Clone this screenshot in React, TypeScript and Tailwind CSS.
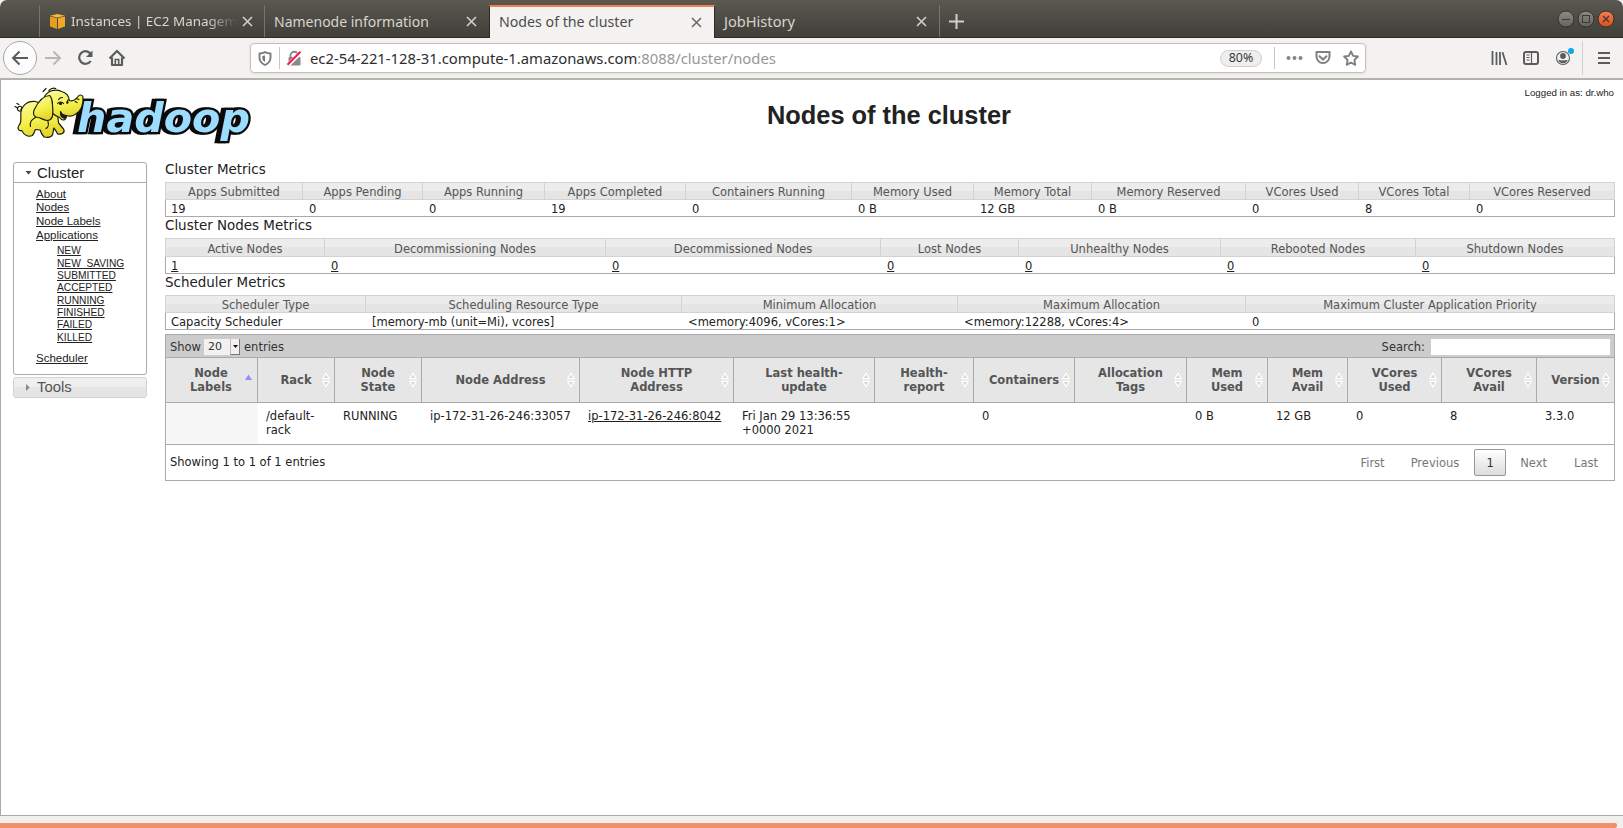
import type { ReactNode } from 'react';

type Col = { w: string; label: string; value: string; link?: boolean };

const clusterMetrics: Col[] = [
  { w: 'w-[137px]', label: 'Apps Submitted', value: '19' },
  { w: 'w-[120px]', label: 'Apps Pending', value: '0' },
  { w: 'w-[122px]', label: 'Apps Running', value: '0' },
  { w: 'w-[141px]', label: 'Apps Completed', value: '19' },
  { w: 'w-[166px]', label: 'Containers Running', value: '0' },
  { w: 'w-[122px]', label: 'Memory Used', value: '0 B' },
  { w: 'w-[118px]', label: 'Memory Total', value: '12 GB' },
  { w: 'w-[154px]', label: 'Memory Reserved', value: '0 B' },
  { w: 'w-[113px]', label: 'VCores Used', value: '0' },
  { w: 'w-[111px]', label: 'VCores Total', value: '8' },
  { w: 'flex-1', label: 'VCores Reserved', value: '0' },
];

const nodeMetrics: Col[] = [
  { w: 'w-[159px]', label: 'Active Nodes', value: '1', link: true },
  { w: 'w-[281px]', label: 'Decommissioning Nodes', value: '0', link: true },
  { w: 'w-[275px]', label: 'Decommissioned Nodes', value: '0', link: true },
  { w: 'w-[138px]', label: 'Lost Nodes', value: '0', link: true },
  { w: 'w-[202px]', label: 'Unhealthy Nodes', value: '0', link: true },
  { w: 'w-[195px]', label: 'Rebooted Nodes', value: '0', link: true },
  { w: 'flex-1', label: 'Shutdown Nodes', value: '0', link: true },
];

const schedulerMetrics: Col[] = [
  { w: 'w-[200px]', label: 'Scheduler Type', value: 'Capacity Scheduler' },
  { w: 'w-[316px]', label: 'Scheduling Resource Type', value: '[memory-mb (unit=Mi), vcores]' },
  { w: 'w-[276px]', label: 'Minimum Allocation', value: '<memory:4096, vCores:1>' },
  { w: 'w-[288px]', label: 'Maximum Allocation', value: '<memory:12288, vCores:4>' },
  { w: 'flex-1', label: 'Maximum Cluster Application Priority', value: '0' },
];

type NodeCol = { w: string; head: string[]; body: string[]; link?: boolean };

const nodeCols: NodeCol[] = [
  { w: 'w-[92px]', head: ['Node', 'Labels'], body: [] },
  { w: 'w-[77px]', head: ['Rack'], body: ['/default-', 'rack'] },
  { w: 'w-[87px]', head: ['Node', 'State'], body: ['RUNNING'] },
  { w: 'w-[158px]', head: ['Node Address'], body: ['ip-172-31-26-246:33057'] },
  { w: 'w-[154px]', head: ['Node HTTP', 'Address'], body: ['ip-172-31-26-246:8042'], link: true },
  { w: 'w-[141px]', head: ['Last health-', 'update'], body: ['Fri Jan 29 13:36:55', '+0000 2021'] },
  { w: 'w-[99px]', head: ['Health-', 'report'], body: [] },
  { w: 'w-[101px]', head: ['Containers'], body: ['0'] },
  { w: 'w-[112px]', head: ['Allocation', 'Tags'], body: [] },
  { w: 'w-[81px]', head: ['Mem', 'Used'], body: ['0 B'] },
  { w: 'w-[80px]', head: ['Mem', 'Avail'], body: ['12 GB'] },
  { w: 'w-[94px]', head: ['VCores', 'Used'], body: ['0'] },
  { w: 'w-[95px]', head: ['VCores', 'Avail'], body: ['8'] },
  { w: 'flex-1', head: ['Version'], body: ['3.3.0'] },
];

function CloseX({ className }: { className: string }) {
  return (
    <svg width="11" height="11" viewBox="0 0 11 11" className={className}>
      <path d="M1 1 10 10M10 1 1 10" stroke="currentColor" strokeWidth="1.6" fill="none" />
    </svg>
  );
}

function TabBar() {
  return (
    <div className="flex h-[38px] items-stretch rounded-t-[7px] border-b border-[#2c2b28] bg-linear-to-b from-[#5b5850] to-[#403f3a] pt-[5px] font-['Noto_Sans',sans-serif] text-[14px] text-[#d9d5cb]">
      <div className="w-[39px]" />
      <div className="flex w-[225px] items-center border-l border-[#77746c] pt-[1px] pr-[12px] pl-[10px]">
        <svg width="15" height="15" viewBox="0 0 15 15" className="mr-[6px] shrink-0">
          <path d="M0 2.5 7 4v11L0 12.5z" fill="#e79e1c" />
          <path d="M15 2.5 8 4v11l7-2.500z" fill="#eda929" />
          <path d="M0 1.700 7.500 0 15 1.700 7.500 3.400z" fill="#f8b93c" />
        </svg>
        <div className="w-[166px] text-[13.45px] whitespace-nowrap [mask-image:linear-gradient(to_right,black_82%,transparent)]">
          Instances | EC2 Managem
        </div>
        <CloseX className="ml-[5px] shrink-0 text-[#d3d0c7]" />
      </div>
      <div className="flex w-[225px] items-center justify-between border-l border-[#77746c] pt-[1px] pr-[12px] pl-[9px]">
        <span>Namenode information</span>
        <CloseX className="text-[#d3d0c7]" />
      </div>
      <div className="mb-[-1px] flex w-[226px] items-center justify-between border-t-2 border-r border-l border-t-[#f0824f] border-r-[#2c2b28] border-l-[#2c2b28] bg-[#f4f2f1] pr-[12px] pb-[1px] pl-[9px] text-[#4c4c4c]">
        <span className="text-[14.2px]">Nodes of the cluster</span>
        <CloseX className="text-[#6a6a6a]" />
      </div>
      <div className="flex w-[225px] items-center justify-between border-r border-[#77746c] pt-[1px] pr-[12px] pl-[9px]">
        <span className="text-[14.6px]">JobHistory</span>
        <CloseX className="text-[#d3d0c7]" />
      </div>
      <div className="flex flex-1 items-center justify-between pr-[8px] pl-[9px]">
        <svg width="15" height="15" viewBox="0 0 15 15">
          <path d="M7.500 0v15M0 7.500h15" stroke="#d3d0c7" strokeWidth="2" />
        </svg>
        <svg width="58" height="20" viewBox="0 0 58 20" className="mb-[4px]">
          <defs>
            <linearGradient id="gray" x2="0" y2="1">
              <stop offset="0" stopColor="#8b8982" />
              <stop offset="1" stopColor="#65635d" />
            </linearGradient>
            <linearGradient id="orange" x2="0" y2="1">
              <stop offset="0" stopColor="#f37e50" />
              <stop offset="1" stopColor="#dc4f1d" />
            </linearGradient>
          </defs>
          <g stroke="#33322e">
            <circle cx="9" cy="10" r="8" fill="url(#gray)" />
            <circle cx="29" cy="10" r="8" fill="url(#gray)" />
            <circle cx="49" cy="10" r="8" fill="url(#orange)" />
          </g>
          <g stroke="#3c3b37" fill="none">
            <path d="M5 10.500h8" />
            <rect x="25.500" y="6.500" width="7" height="7" />
            <path d="m46 7 6 6m0-6-6 6" strokeWidth="1.300" />
          </g>
        </svg>
      </div>
    </div>
  );
}

function NavBar() {
  return (
    <div className="flex h-[42px] items-center border-b-2 border-[#b5b1ad] bg-[#f4f2f1] font-['Noto_Sans',sans-serif]">
      <svg width="250" height="40" viewBox="0 0 250 40" fill="none" stroke="#5c5c5c" strokeWidth="2" className="shrink-0">
        <circle cx="20" cy="20" r="16.500" fill="#fcfcfc" stroke="#a9a7a4" strokeWidth="1" />
        <path d="M28 20H13.500M19.500 13.500 13 20l6.500 6.500" />
        <path d="M45 20h14.500M53.500 13.500 60 20l-6.500 6.500" stroke="#b9b7b5" />
        <path d="M91 16.500a6.300 6.300 0 1 0-.3 6.500" strokeWidth="2.200" />
        <path d="M92.500 12.500v6.500H86z" fill="#5c5c5c" stroke="none" />
        <path d="M109.500 20.500 117 13l7.500 7.500M112 19.500v7.500h10v-7.500" strokeWidth="2.200" strokeLinejoin="round" />
        <path d="M115.300 26v-4.500h3.400V26" strokeWidth="1.600" />
      </svg>
      <div className="flex h-[30px] w-[1116px] items-center rounded-[4px] border border-[#c3c0bd] bg-white shadow-[0_1px_3px_rgba(0,0,0,0.08)]">
        <svg width="59" height="28" viewBox="0 0 59 28" className="shrink-0">
          <path d="M14 8.200c-2 1.100-3.500 1.300-5.500 1.300v4c0 3.600 1.600 5.800 5.500 7.500 3.900-1.700 5.500-3.900 5.500-7.500v-4c-2 0-3.500-.2-5.500-1.300z" fill="none" stroke="#7b7b7b" strokeWidth="1.900" strokeLinejoin="round" />
          <path d="M14 11.200c-1 .5-1.700.7-2.700.8v1.800c0 2 .8 3.200 2.700 4.300z" fill="#7b7b7b" />
          <path d="M28.500 3v22" stroke="#c9c7c4" />
          <path d="M39.500 14v-2.500a3.800 3.800 0 0 1 7.600 0V14" fill="none" stroke="#8a8a8a" strokeWidth="1.900" />
          <rect x="37.500" y="13" width="12" height="8.500" rx="1" fill="#8a8a8a" />
          <path d="M37.300 20.800 50 8.200" stroke="#fff" strokeWidth="4" />
          <path d="M36.500 20.800 49.500 7.800" stroke="#f5154b" strokeWidth="2" />
        </svg>
        <div className="flex-1 text-[14.82px] whitespace-nowrap text-[#2e2e2e]">
          ec2-54-221-128-31.compute-1.amazonaws.com<span className="text-[#979797]">:8088/cluster/nodes</span>
        </div>
        <div className="mr-[12px] flex h-[17px] w-[42px] items-center justify-center rounded-full border border-[#d0cecb] bg-[#efeeee] pt-[1px] text-[12.4px] text-[#3a3a3a]">
          80%
        </div>
        <svg width="91" height="28" viewBox="0 0 91 28" className="shrink-0" fill="none" stroke="#7f7f7f" strokeWidth="2">
          <path d="M.5 3v22" stroke="#c9c7c4" strokeWidth="1" />
          <g fill="#858585" stroke="none">
            <circle cx="14.500" cy="14" r="2" />
            <circle cx="20.500" cy="14" r="2" />
            <circle cx="26.500" cy="14" r="2" />
          </g>
          <path d="M42.500 8h13v4.500a6.500 6.500 0 0 1-13 0z" strokeLinejoin="round" />
          <path d="m45.500 12.300 3.500 3.300 3.500-3.300" strokeLinecap="round" />
          <path d="m77 7.400 2.100 4.500 4.800.6-3.500 3.400.8 4.900-4.200-2.300-4.200 2.300.8-4.900-3.500-3.400 4.800-.6z" strokeWidth="1.900" strokeLinejoin="round" />
        </svg>
      </div>
      <div className="flex-1" />
      <svg width="140" height="40" viewBox="0 0 140 40" className="shrink-0" fill="none" stroke="#5c5c5c" strokeWidth="2">
        <path d="M9.500 13v14M13.500 14v13M17 14v13M19.500 14.300l4 12.700" strokeWidth="1.800" />
        <rect x="41" y="14" width="14" height="12" rx="2" />
        <path d="M48.500 14v12M43.500 17h3M43.500 19.500h3M43.500 22h3" strokeWidth="1.200" />
        <circle cx="80" cy="20" r="6.500" strokeWidth="1.100" />
        <circle cx="80" cy="18" r="2.900" fill="#5c5c5c" stroke="none" />
        <path d="M75.500 21.500c1.500 1.200 7.500 1.200 9 0 0 5-9 5-9 0z" fill="#5c5c5c" stroke="none" />
        <circle cx="88" cy="13" r="3" fill="#0aa9ee" stroke="none" />
        <path d="M99.500 3v34" stroke="#d3d0ce" strokeWidth="1" />
        <path d="M115 15h12M115 20h12M115 25h12" />
      </svg>
    </div>
  );
}

function Logo() {
  return (
    <svg width="244" height="62" viewBox="0 0 244 62" className="shrink-0">
      <defs>
        <linearGradient id="skin" x2="0.300" y2="1">
          <stop offset="0" stopColor="#fbf9a0" />
          <stop offset="0.600" stopColor="#f5f04e" />
          <stop offset="1" stopColor="#e2d52c" />
        </linearGradient>
      </defs>
      <text
        x="63"
        y="46.500"
        textLength="173"
        lengthAdjust="spacingAndGlyphs"
        fontFamily="DejaVu Sans"
        fontWeight="bold"
        fontStyle="italic"
        fontSize="40"
        fill="#9bdcff"
        stroke="#0a0a0a"
        strokeWidth="4.500"
        paintOrder="stroke"
        className="[filter:drop-shadow(-3px_0.500px_0_#0a0a0a)]"
      >
        hadoop
      </text>
      <g transform="translate(0 2.500) scale(.97 1)" fill="url(#skin)" stroke="#1a1a08" strokeWidth="1.200" strokeLinejoin="round" strokeLinecap="round">
        <path d="M8 23C4 25 2 21 5 19c3-1 4 2 2 3M3 16l2 1M1 19l2 1" fill="none" />
        <path d="M22 14C13 13 7 19 7 27c0 5 1 8-2 11-2 3 0 6 3 5 2 4 6 7 11 5 2-2 2-4 3-6l5 .5c1 4 2 5 4 7 5 1 8 0 9-3l1-6c2 2 3 4 4 6 5 1 8-2 6-5l-5-6-2-15z" />
        <path d="M31 10c3-7 12-9 18-6 5 1 8 5 8 9 3 1 6 0 9-4 1-2 4-2 5 0 1 8-2 15-8 18-3 2-6 2-9 1 0 5-4 6-7 2-3-1-5-2-7-4z" />
        <path d="M37 8c-7 0-12 6-16 14-2 4-1 7 3 8 4 0 6 3 11 3 6-1 5-7 5-12-1-4 1-8-3-13z" />
        <path d="M48 24c1 3 4 4 6 4-1 4-5 3-6-1z" fill="#222" />
        <path d="M45 16c1-2 5-2 6 0M55 14l1-2M46 12c1-2 3-2 4-2M63 14l2 1M64 11l3 1M22 30c-4 2-6 5-5 9M35 34c1 3 0 6-2 7M43 1c-3-1-5 0-7 2M33 1l-3 3" fill="none" />
        <circle cx="48" cy="16" r="1" fill="#111" />
        <circle cx="55" cy="15" r=".7" fill="#111" />
      </g>
    </svg>
  );
}

function SideLink({ h, children }: { h: string; children: ReactNode }) {
  return (
    <li className={`flex items-end leading-[13px] ${h}`}>
      <a href="#" className="underline decoration-1 underline-offset-1">{children}</a>
    </li>
  );
}

function Sidebar() {
  return (
    <nav className="w-[134px] font-['Liberation_Sans',sans-serif] text-[11.5px] text-[#222]">
      <div className="h-[213px] rounded-[3px] border border-[#aaa] bg-white">
        <div className="flex h-[20px] items-center border-b border-[#aaa] pt-[1px] pl-[11px] text-[14.9px]">
          <svg width="7" height="4" viewBox="0 0 7 4" className="mr-[5px]"><path d="M.5 0h6L3.500 3.500z" fill="#454545" /></svg>
          <span className="leading-[18px]">Cluster</span>
        </div>
        <ul className="pt-[5px] pl-[22px]">
          <SideLink h="h-[13px]">About</SideLink>
          <SideLink h="h-[13px]">Nodes</SideLink>
          <SideLink h="h-[14px]">Node Labels</SideLink>
          <SideLink h="h-[14px]">Applications</SideLink>
          <li className="pt-[2px] pl-[21px] text-[10.2px]">
            <ul>
              <SideLink h="h-[13px]">NEW</SideLink>
              <SideLink h="h-[13px]">NEW_SAVING</SideLink>
              <SideLink h="h-[12px]">SUBMITTED</SideLink>
              <SideLink h="h-[12px]">ACCEPTED</SideLink>
              <SideLink h="h-[13px]">RUNNING</SideLink>
              <SideLink h="h-[12px]">FINISHED</SideLink>
              <SideLink h="h-[12px]">FAILED</SideLink>
              <SideLink h="h-[13px]">KILLED</SideLink>
            </ul>
          </li>
          <li className="h-[8px]" />
          <SideLink h="h-[13px]">Scheduler</SideLink>
        </ul>
      </div>
      <div className="mt-[2px] flex h-[21px] items-center rounded-[3px] border border-[#d3d3d3] bg-linear-to-b from-[#efefef] from-50% to-[#e5e5e5] to-50% pl-[12px] text-[14.9px] text-[#555]">
        <svg width="4" height="7" viewBox="0 0 4 7" className="mr-[7px]"><path d="M0 0v7l3.700-3.500z" fill="#888" /></svg>
        Tools
      </div>
    </nav>
  );
}

function Metrics({ title, head, cols }: { title: string; head: string; cols: Col[] }) {
  return (
    <section>
      <h3 className="h-[21px] pt-[1px] text-[13.44px] leading-[16px]">{title}</h3>
      <div className={`flex border-y border-r border-[#d3d3d3] bg-linear-to-b from-[#ececec] from-50% to-[#e5e5e5] to-50% leading-[18px] text-[#555] ${head}`}>
        {cols.map((c) => (
          <div key={c.label} className={`border-l border-[#d3d3d3] text-center whitespace-nowrap ${c.w}`}>
            {c.label}
          </div>
        ))}
      </div>
      <div className="flex h-[17px] border-r border-b border-l border-[#aaa] bg-white leading-[18px]">
        {cols.map((c, i) => (
          <div key={c.label} className={`whitespace-nowrap ${i === 0 ? '-ml-px pl-[6px]' : 'pl-[7px]'} ${c.w}`}>
            {c.link ? <a href="#" className="underline underline-offset-1">{c.value}</a> : c.value}
          </div>
        ))}
      </div>
    </section>
  );
}

function SortIcon({ active }: { active: boolean }) {
  return active ? (
    <svg width="7" height="14" viewBox="0 0 7 14" className="mr-[5px] shrink-0">
      <path d="M0 7 3.500 1.500 7 7z" fill="#8d92fa" />
    </svg>
  ) : (
    <svg width="8" height="16" viewBox="0 0 8 16" className="mr-[4px] shrink-0" fill="#d8d8d8" stroke="#fff" strokeWidth="1.100">
      <path d="M.8 6.600 4 1.200 7.200 6.600z" />
      <path d="M.8 9.400 4 14.800 7.200 9.400z" />
    </svg>
  );
}

function NodesTable() {
  return (
    <section className="mt-[4px] border border-[#aaa]">
      <div className="flex h-[23px] items-center border-b border-[#aaa] bg-[#ccc] pt-[2px] pr-[4px] pl-[4px] leading-[18px] text-[#333]">
        <span>Show</span>
        <div className="mr-[4px] ml-[3px] flex h-[16px] w-[36px] items-center bg-[#f2f1f0] pl-[4px]">
          <span className="flex-1 text-[11px]">20</span>
          <span className="flex h-full w-[10px] items-center justify-center border-r border-b border-l border-r-[#777] border-b-[#777] border-l-[#bbb]">
            <svg width="5" height="3" viewBox="0 0 5 3"><path d="M0 0h5L2.500 3z" fill="#111" /></svg>
          </span>
        </div>
        <span>entries</span>
        <span className="ml-auto">Search:</span>
        <input className="ml-[6px] h-[16px] w-[179px] bg-white" />
      </div>
      <div className="flex h-[45px] border-b border-[#aaa] bg-[#e6e6e6] font-bold text-[#555]">
        {nodeCols.map((c, i) => (
          <div key={c.head.join()} className={`flex items-center ${i === 0 ? '-ml-px' : 'border-l border-[#aaa]'} ${c.w}`}>
            <div className="flex-1 pl-[12px] text-center leading-[14px] whitespace-nowrap">
              {c.head.map((l) => <div key={l}>{l}</div>)}
            </div>
            <SortIcon active={i === 0} />
          </div>
        ))}
      </div>
      <div className="flex h-[42px] border-b border-[#aaa] bg-white">
        {nodeCols.map((c, i) => (
          <div key={c.head.join()} className={`pt-[6px] pl-[8px] leading-[14px] whitespace-nowrap ${i === 0 ? 'bg-[#f7f7f7]' : ''} ${c.w}`}>
            {c.body.map((l) => <div key={l} className={c.link ? 'underline underline-offset-1' : ''}>{l}</div>)}
          </div>
        ))}
      </div>
      <div className="flex h-[35px] items-center bg-white pr-[4px] pl-[4px]">
        <span className="flex-1">Showing 1 to 1 of 1 entries</span>
        <div className="flex items-center text-[#777]">
          <span className="mr-[26px] pt-[2px]">First</span>
          <span className="mr-[15px] pt-[2px]">Previous</span>
          <span className="flex h-[27px] w-[32px] items-center justify-center rounded-[2px] border border-[#979797] bg-linear-to-b from-white to-[#dcdcdc] pt-[2px] text-[#333]">1</span>
          <span className="ml-[14px] pt-[2px]">Next</span>
          <span className="mr-[12px] ml-[27px] pt-[2px]">Last</span>
        </div>
      </div>
    </section>
  );
}

export default function App() {
  return (
    <div className="flex h-[828px] w-[1623px] flex-col overflow-hidden bg-[#f2f0ef]">
      <TabBar />
      <NavBar />
      <div className="flex h-[736px] flex-col border-b border-l border-[#aaa] bg-white text-[#222]">
        <header className="flex h-[82px] pl-[13px] font-['Liberation_Sans',sans-serif]">
          <div className="w-[240px] pt-[5px]"><Logo /></div>
          <h1 className="flex-1 pt-[20px] pl-[513px] text-[25.38px] leading-[30px] font-bold">Nodes of the cluster</h1>
          <div className="pt-[7px] pr-[9px] text-[9.7px] leading-[12px]">Logged in as: dr.who</div>
        </header>
        <div className="flex gap-[18px] pl-[12px]">
          <Sidebar />
          <main className="-mt-px w-[1450px] font-['DejaVu_Sans',sans-serif] text-[11.5px]">
            <Metrics title="Cluster Metrics" head="h-[18px]" cols={clusterMetrics} />
            <Metrics title="Cluster Nodes Metrics" head="h-[19px] pt-[1px] [&>div]:-mt-px [&>div]:pt-px" cols={nodeMetrics} />
            <Metrics title="Scheduler Metrics" head="h-[18px]" cols={schedulerMetrics} />
            <NodesTable />
          </main>
        </div>
      </div>
      <div className="mt-auto h-[5px] w-[1617px] rounded-r-[2px] bg-[#f28f68]" />
    </div>
  );
}
